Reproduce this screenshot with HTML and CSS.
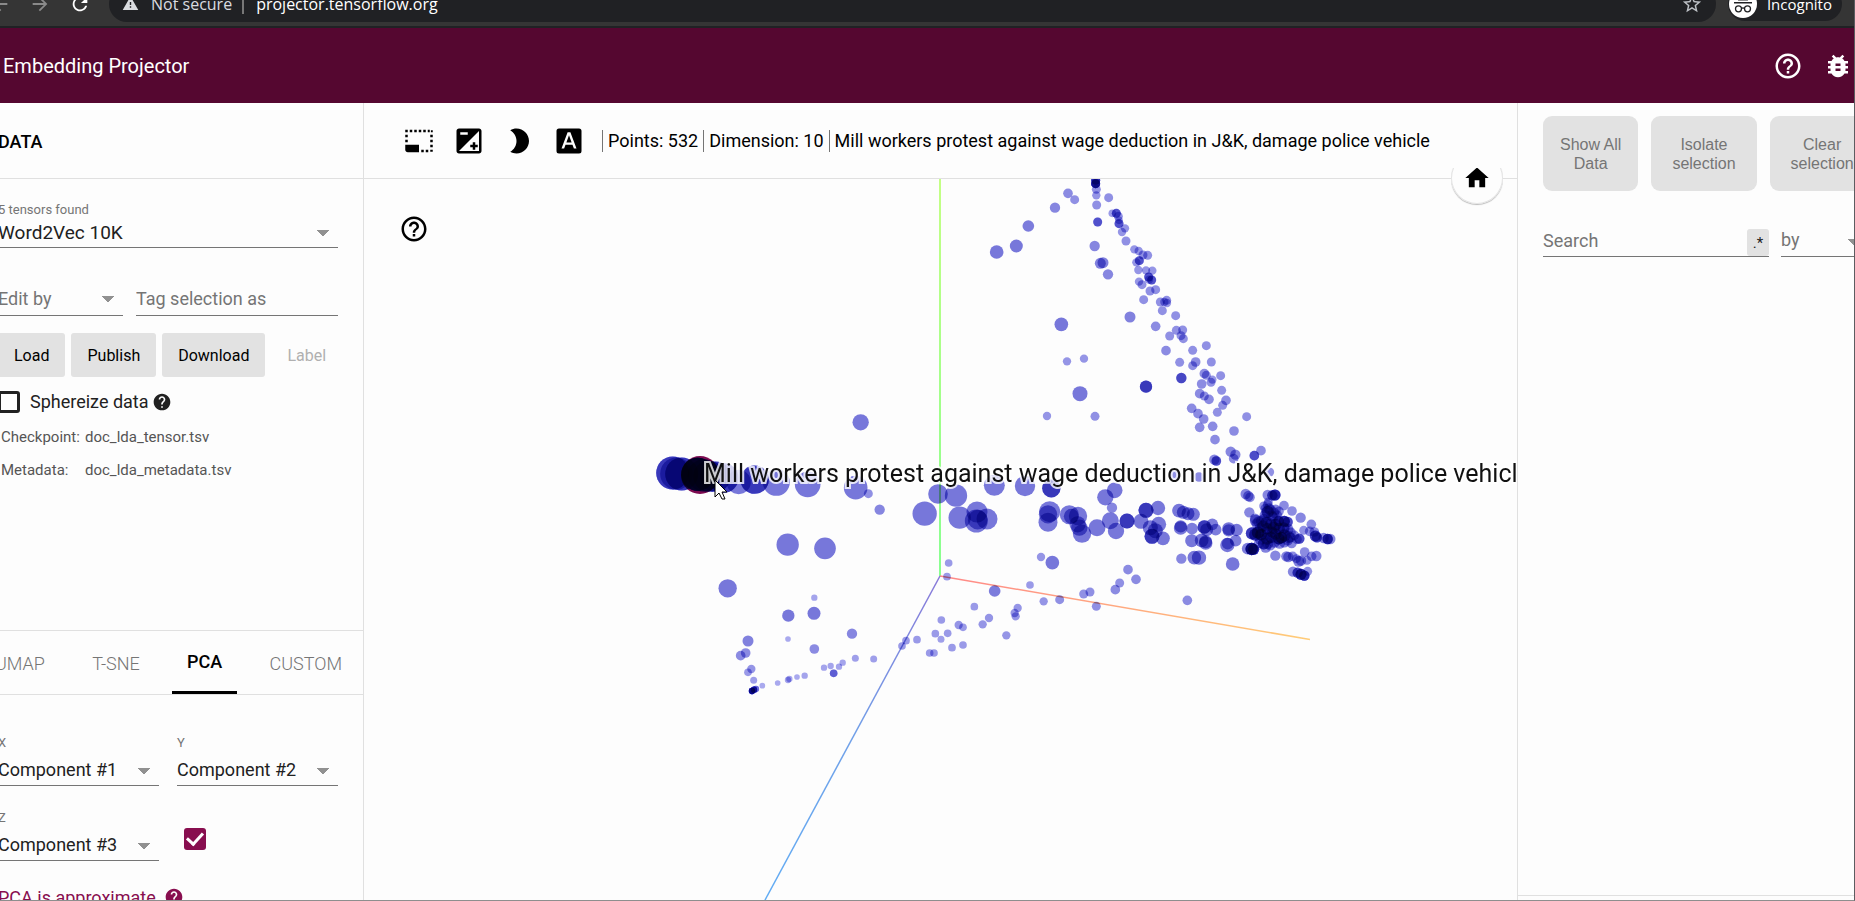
FILE: index.html
```html
<!DOCTYPE html>
<html lang="en">
<head>
<meta charset="utf-8">
<title>Embedding Projector</title>
<link rel="stylesheet" href="styles.css">
</head>
<body>
<svg class="sprite" aria-hidden="true">
  <symbol id="i-help-outline" viewBox="0 0 24 24"><path d="M11 18h2v-2h-2v2zm1-16C6.480 2 2 6.480 2 12s4.480 10 10 10 10-4.480 10-10S17.520 2 12 2zm0 18c-4.410 0-8-3.590-8-8s3.590-8 8-8 8 3.590 8 8-3.590 8-8 8zm0-14c-2.210 0-4 1.790-4 4h2c0-1.100.9-2 2-2s2 .9 2 2c0 2-3 1.750-3 5h2c0-2.250 3-2.500 3-5 0-2.210-1.790-4-4-4z"/></symbol>
  <symbol id="i-help" viewBox="0 0 24 24"><path d="M12 2C6.480 2 2 6.480 2 12s4.480 10 10 10 10-4.480 10-10S17.520 2 12 2zm1 17h-2v-2h2v2zm2.070-7.750l-.9.920C13.450 12.900 13 13.500 13 15h-2v-.5c0-1.100.45-2.100 1.170-2.830l1.240-1.260c.37-.36.590-.86.590-1.410 0-1.100-.9-2-2-2s-2 .9-2 2H8c0-2.210 1.790-4 4-4s4 1.790 4 4c0 .88-.36 1.680-.93 2.250z"/></symbol>
  <symbol id="i-bug" viewBox="0 0 24 24"><path d="M20 8h-2.810c-.45-.78-1.070-1.450-1.820-1.960L17 4.410 15.590 3l-2.170 2.170C12.960 5.060 12.490 5 12 5c-.49 0-.96.060-1.410.17L8.410 3 7 4.410l1.620 1.630C7.880 6.550 7.260 7.220 6.810 8H4v2h2.090c-.05.33-.09.66-.09 1v1H4v2h2v1c0 .34.04.67.09 1H4v2h2.810c1.040 1.790 2.970 3 5.190 3s4.150-1.210 5.190-3H20v-2h-2.090c.05-.33.09-.66.09-1v-1h2v-2h-2v-1c0-.34-.04-.67-.09-1H20V8zm-6 8h-4v-2h4v2zm0-4h-4v-2h4v2z"/></symbol>
  <symbol id="i-select" viewBox="0 0 24 24"><path d="M1 15h11v6H3c-1.100 0-2-.9-2-2z"/><path d="M1 3h2v2H1zM4.600 3h2v2h-2zM8.200 3h2v2h-2zM11.800 3h2v2h-2zM15.400 3h2v2h-2zM19 3h1.600v2H19zM21.500 3.400h1.500v1.600h-1.500zM1 7h2v2H1zM1 11h2v2H1zM21 7h2v2h-2zM21 11h2v2h-2zM21 15h2v2h-2zM21 19h2v1.500h-2zM13.800 19h2v2h-2zM17.400 19h2v2h-2z"/></symbol>
  <symbol id="i-exposure" viewBox="0 0 24 24"><path d="M15 17v2h2v-2h2v-2h-2v-2h-2v2h-2v2h2zm5-15H4c-1.100 0-2 .9-2 2v16c0 1.100.9 2 2 2h16c1.100 0 2-.9 2-2V4c0-1.100-.9-2-2-2zM5 5h6v2H5V5zm15 15H4L20 4v16z"/></symbol>
  <symbol id="i-moon" viewBox="0 0 24 24"><path d="M10 2c-1.820 0-3.530.5-5 1.350C7.990 5.080 10 8.300 10 12s-2.010 6.920-5 8.650C6.470 21.500 8.180 22 10 22c5.520 0 10-4.480 10-10S15.520 2 10 2z"/></symbol>
  <symbol id="i-labels" viewBox="0 0 24 24"><path fill-rule="evenodd" d="M4 2h16a2 2 0 0 1 2 2v16a2 2 0 0 1-2 2H4a2 2 0 0 1-2-2V4a2 2 0 0 1 2-2zm6.900 3L6 18h2.100l1.100-3h5.600l1.100 3H18L13.100 5zm1.100 2.400l2.100 5.800H9.900z"/></symbol>
  <symbol id="i-home" viewBox="0 0 24 24"><path d="M10 20v-6h4v6h5v-8h3L12 3 2 12h3v8z"/></symbol>
  <symbol id="i-back" viewBox="0 0 24 24"><path d="M20 11H7.830l5.590-5.590L12 4l-8 8 8 8 1.410-1.410L7.830 13H20v-2z"/></symbol>
  <symbol id="i-forward" viewBox="0 0 24 24"><path d="M12 4l-1.410 1.410L16.170 11H4v2h12.170l-5.580 5.590L12 20l8-8z"/></symbol>
  <symbol id="i-reload" viewBox="0 0 24 24"><path d="M17.650 6.350C16.200 4.900 14.210 4 12 4c-4.420 0-7.990 3.580-7.990 8s3.570 8 7.990 8c3.730 0 6.840-2.550 7.730-6h-2.080c-.82 2.330-3.040 4-5.650 4-3.310 0-6-2.690-6-6s2.690-6 6-6c1.660 0 3.140.69 4.220 1.780L13 11h7V4l-2.350 2.350z"/></symbol>
  <symbol id="i-warning" viewBox="0 0 24 24"><path d="M1 21h22L12 2 1 21zm12-3h-2v-2h2v2zm0-4h-2v-4h2v4z"/></symbol>
  <symbol id="i-star" viewBox="0 0 24 24"><path d="M22 9.240l-7.190-.62L12 2 9.190 8.630 2 9.240l5.460 4.730L5.820 21 12 17.270 18.180 21l-1.630-7.030L22 9.240zM12 15.400l-3.760 2.270 1-4.280-3.320-2.880 4.380-.38L12 6.100l1.710 4.040 4.380.38-3.320 2.880 1 4.280L12 15.400z"/></symbol>
  <symbol id="i-incognito" viewBox="0 0 28 28"><circle cx="14" cy="14" r="14" fill="#fff"/><path d="M5 12h18v1.600H5zM9 10.400l1.500-6h7l1.500 6z" fill="#202124"/><g fill="none" stroke="#202124" stroke-width="1.300"><circle cx="9.500" cy="18.800" r="3"/><circle cx="18.500" cy="18.800" r="3"/><path d="M12.500 18.500q1.500-1.200 3 0"/></g></symbol>
</svg>
<div class="window">
  <div class="browser">
    <svg class="nav dim"><use href="#i-back"/></svg>
    <svg class="nav dim"><use href="#i-forward"/></svg>
    <svg class="nav"><use href="#i-reload"/></svg>
    <div class="address">
      <svg class="warn"><use href="#i-warning"/></svg>
      <span class="insecure">Not secure</span>
      <span class="url">projector.tensorflow.org</span>
      <svg class="star"><use href="#i-star"/></svg>
    </div>
    <div class="incognito"><svg><use href="#i-incognito"/></svg><span>Incognito</span></div>
  </div>
  <div class="shell">
    <header class="appbar">
      <h1>Embedding Projector</h1>
      <a href="#help" aria-label="Help"><svg class="icon"><use href="#i-help-outline"/></svg></a>
      <a href="#bug" aria-label="Report a bug"><svg class="icon"><use href="#i-bug"/></svg></a>
    </header>
    <main class="columns">
      <aside class="side">
        <h2>DATA</h2>
        <div class="data">
          <label class="small" for="tensor">5 tensors found</label>
          <select id="tensor" class="field"><option>Word2Vec 10K</option></select>
          <div class="edit">
            <select class="field muted" aria-label="Edit by"><option>Edit by</option></select>
            <input class="field" type="text" placeholder="Tag selection as" aria-label="Tag selection as">
          </div>
          <div class="actions">
            <button>Load</button><button>Publish</button><button>Download</button><button class="flat" disabled>Label</button>
          </div>
          <div class="sphere">
            <input type="checkbox" id="sphere" class="box"><label for="sphere">Sphereize data</label><svg class="hint"><use href="#i-help"/></svg>
          </div>
          <dl class="files">
            <dt>Checkpoint:</dt><dd>doc_lda_tensor.tsv</dd>
            <dt>Metadata:</dt><dd>doc_lda_metadata.tsv</dd>
          </dl>
        </div>
        <nav class="tabs">
          <button>UMAP</button><button>T-SNE</button><button class="active">PCA</button><button>CUSTOM</button>
        </nav>
        <div class="pca">
          <div class="axis"><label class="small" for="cx">X</label><select id="cx" class="field"><option>Component #1</option></select></div>
          <div class="axis"><label class="small" for="cy">Y</label><select id="cy" class="field"><option>Component #2</option></select></div>
          <div class="axis"><label class="small" for="cz">Z</label><select id="cz" class="field"><option>Component #3</option></select></div>
          <div class="toggle"><input type="checkbox" class="box" checked aria-label="Use component Z"></div>
          <p class="approx">PCA is approximate. <svg class="hint"><use href="#i-help"/></svg></p>
        </div>
      </aside>
      <section class="center">
        <div class="toolbar">
          <button aria-label="Bounding box selection"><svg class="icon"><use href="#i-select"/></svg></button>
          <button aria-label="Toggle selection edit mode"><svg class="icon"><use href="#i-exposure"/></svg></button>
          <button aria-label="Night mode"><svg class="icon"><use href="#i-moon"/></svg></button>
          <button aria-label="3D labels"><svg class="icon"><use href="#i-labels"/></svg></button>
          <div class="stats"><span>Points: 532</span><span>Dimension: 10</span><span>Mill workers protest against wage deduction in J&amp;K, damage police vehicle</span></div>
        </div>
        <div class="stage">
          <svg id="scene" viewBox="364 179 1153 721" preserveAspectRatio="xMinYMin slice">
            <defs>
              <linearGradient id="gx" gradientUnits="userSpaceOnUse" x1="940" y1="576" x2="1310" y2="639"><stop offset="0" stop-color="#f88"/><stop offset="1" stop-color="#fc7"/></linearGradient>
              <linearGradient id="gz" gradientUnits="userSpaceOnUse" x1="940" y1="576" x2="765" y2="900"><stop offset="0" stop-color="#8878d8"/><stop offset=".5" stop-color="#70a0e8"/><stop offset="1" stop-color="#60acf4"/></linearGradient>
              <linearGradient id="gy" gradientUnits="userSpaceOnUse" x1="940" y1="179" x2="940" y2="576"><stop offset="0" stop-color="#c4ff84"/><stop offset="1" stop-color="#88ff90"/></linearGradient>
            </defs>
            <rect x="939" y="179" width="2" height="397" fill="url(#gy)"/>
            <path d="M940 576L1310 639.500" stroke="url(#gx)" stroke-width="1.500"/>
            <path d="M940 576L765 900" stroke="url(#gz)" stroke-width="1.500"/>
            <g id="points"></g>
            <text class="hover-label" x="704" y="482">Mill workers protest against wage deduction in J&amp;K, damage police vehicle</text>
            <path d="M715 480v17l4-4 3 6h3l-3-7h5z" fill="#fff" stroke="#000"/>
          </svg>
          <button class="scene-help" aria-label="Scene help"><svg class="icon"><use href="#i-help-outline"/></svg></button>
          <div class="home-wrap"><button class="home" aria-label="Reset view"><svg><use href="#i-home"/></svg></button></div>
        </div>
      </section>
      <aside class="inspector">
        <div class="bulk"><button>Show All<br>Data</button><button>Isolate<br>selection</button><button>Clear<br>selection</button></div>
        <div class="search">
          <div class="query"><input type="text" placeholder="Search" aria-label="Search"><button aria-label="Regex">.*</button></div>
          <select class="field muted" aria-label="Search by"><option>by</option></select>
        </div>
        <div class="bookmarks"></div>
      </aside>
    </main>
  </div>
</div>
<script src="points.js"></script>
</body>
</html>
```
FILE: styles.css
```css
* { box-sizing: border-box; }
body { margin: 0; font-family: Roboto, "Liberation Sans", sans-serif; font-size: 18px; color: #212121; background: #fdfdfd; }
button, input, select { font: inherit; color: inherit; }
button { border: 0; background: none; padding: 0; }
h1, h2, p, dl, dd { margin: 0; }
.sprite { position: absolute; width: 0; height: 0; }
.window { display: flex; flex-direction: column; height: 100vh; overflow: hidden; border-right: 1px solid #5c5c60; border-bottom: 1px solid #8e8e8e; }

.browser { display: flex; align-items: center; flex: none; height: 50px; margin-top: -22px; padding: 3px 12px 0 0; background: #353535; border-bottom: 2px solid #202124; color: #e8eaed; font-family: "Open Sans", "Noto Sans", sans-serif; font-size: 16px; }
.nav { width: 22px; height: 22px; flex: none; margin-right: 18px; fill: #fff; }
.nav:first-child { margin-left: -11px; }
.nav.dim { fill: #8a8a8a; }
.address { display: flex; align-items: center; flex: 1; height: 36px; margin-right: 12px; padding: 0 13px; background: #202124; border-radius: 18px; }
.warn { width: 17px; height: 17px; margin-right: 12px; fill: #dadce0; }
.insecure { color: #dadce0; padding-right: 10px; margin-right: 12px; border-right: 2px solid #777; line-height: 20px; }
.url { color: #fff; }
.star { width: 22px; height: 22px; margin-left: auto; fill: #bdc1c6; }
.incognito { display: flex; align-items: center; gap: 10px; height: 34px; padding: 0 10px 0 1px; border-radius: 17px; background: #202124; color: #fff; font-size: 15px; }
.incognito svg { width: 28px; height: 28px; }

.shell { display: flex; flex-direction: column; flex: 1; min-height: 0; margin: 0 -24px; }
.icon { display: block; width: 30px; height: 30px; fill: currentColor; }
.appbar { display: flex; align-items: center; flex: none; height: 75px; padding: 0 25px 0 27px; background: #550730; color: #fff; gap: 20px; }
.appbar h1 { flex: 1; font-size: 20px; font-weight: 400; }
.appbar a { color: #fff; }
.columns { display: grid; grid-template-columns: 388px minmax(0, 1fr) 361px; flex: 1; min-height: 0; }

.side { border-right: 1px solid #e0e0e0; overflow: hidden; }
.side h2 { height: 76px; padding-left: 22px; line-height: 78px; font-size: 18px; font-weight: 500; color: #000; border-bottom: 1px solid #e0e0e0; }
.data { min-height: 451px; padding: 21px 25px 0 22px; }
.small { display: block; font-size: 13px; line-height: 20px; color: #757575; }
.field { display: block; width: 100%; min-width: 0; height: 34px; padding: 0 0 2px; border: 0; border-bottom: 1px solid #757575; border-radius: 0; appearance: none; background: transparent; outline: 0; }
select.field {
  background-image: linear-gradient(to top right, transparent 50%, #919191 51%), linear-gradient(to top left, transparent 50%, #919191 51%);
  background-size: 7px 7px;
  background-position: right 15px top 14px, right 8px top 14px;
  background-repeat: no-repeat;
}
#tensor { height: 28px; padding-bottom: 3px; font-size: 19px; background-position: right 15px top 10px, right 8px top 10px; }
.muted, .field::placeholder { color: #757575; opacity: 1; }
.edit { display: grid; grid-template-columns: 125px minmax(0, 1fr); gap: 13px; margin-top: 34px; }
.edit .field { padding-bottom: 0; }
.actions { display: flex; gap: 6px; margin-top: 17px; }
.actions button { height: 44px; padding: 0 16px; border-radius: 3px; background: #e2e2e2; color: #000; font-size: 16px; }
.actions .flat { background: none; color: #b0b0b0; }
.sphere { display: flex; align-items: center; margin-top: 12px; height: 25px; }
.box { appearance: none; display: block; flex: none; width: 22px; height: 22px; margin: 0; border: 3px solid #212121; border-radius: 3px; }
.box:checked { border: 0; background: #880e4f; display: grid; place-items: center; }
.box:checked::after { content: ""; width: 7px; height: 13px; margin-top: -4px; border: solid #fff; border-width: 0 3px 3px 0; transform: rotate(42deg); }
.sphere label { margin: 0 3px 0 10px; }
.hint { flex: none; width: 20px; height: 20px; fill: currentColor; }
.files { display: grid; grid-template-columns: 84px 1fr; row-gap: 13px; margin: 13px 0 0 3px; font-size: 15px; line-height: 20px; color: #555; }
.tabs { display: flex; justify-content: space-between; height: 65px; padding: 0 6px 0 4px; border-top: 1px solid #e0e0e0; border-bottom: 1px solid #e0e0e0; }
.tabs button { padding: 4px 15px 0; font-weight: 300; color: #757575; border-bottom: 3px solid transparent; }
.tabs .active { font-weight: 500; color: #000; border-color: #000; padding-top: 0; }
.pca { display: grid; grid-template-columns: repeat(2, minmax(0, 1fr)); column-gap: 18px; row-gap: 21px; padding: 37px 25px 0 22px; white-space: nowrap; }
.axis .small { line-height: 22px; }
.axis .field { height: 32px; padding-bottom: 0; }
.toggle { padding: 21px 7px 0; }
.approx { display: flex; grid-column: 1 / -1; gap: 4px; align-items: center; height: 30px; color: #880e4f; }

.center { display: flex; flex-direction: column; min-width: 0; }
.toolbar { display: flex; align-items: center; flex: none; height: 76px; gap: 20px; padding-left: 40px; border-bottom: 1px solid #e0e0e0; color: #000; }
.stats { display: flex; white-space: nowrap; gap: 5px; margin-left: -2px; }
.stats span { border-left: 1px solid #757575; padding-left: 5px; line-height: 22px; }
.stage { position: relative; flex: 1; min-height: 0; }
#scene { display: block; width: 100%; height: 100%; isolation: isolate; }
#points circle { mix-blend-mode: multiply; }
.hover-label { font-size: 25px; fill: #111; stroke: #fff; stroke-width: 4px; stroke-opacity: .8; paint-order: stroke; }
.scene-help { position: absolute; left: 35px; top: 35px; color: #000; }
.home-wrap { position: absolute; top: -11px; right: 14px; height: 42px; padding: 0 0 4px; overflow: hidden; }
.home { display: grid; place-items: center; width: 52px; height: 52px; margin-top: -16px; border-radius: 50%; background: #fdfdfd; box-shadow: inset 0 0 0 1px #e4e4e4, 0 1px 1px #bbb; }
.home svg { width: 28px; height: 28px; }

.inspector { display: flex; flex-direction: column; border-left: 1px solid #e0e0e0; padding: 13px 0 0 25px; overflow: hidden; }
.bulk { display: flex; gap: 13px; }
.bulk button { flex: none; height: 75px; padding: 0 21px; border-radius: 9px; background: #e2e2e2; color: #757575; font-family: "Liberation Sans", sans-serif; font-size: 16px; line-height: 19px; }
.bulk button:first-child { padding: 0 17px; }
.search { display: flex; gap: 12px; margin-top: 34px; }
.query { display: flex; flex: none; width: 226px; height: 32px; align-items: flex-end; border-bottom: 1px solid #757575; }
.query input { flex: 1; min-width: 0; height: 32px; border: 0; padding: 0; background: none; outline: 0; }
.query input::placeholder { color: #757575; opacity: 1; }
.query button { width: 22px; height: 27px; border-radius: 3px; background: #e2e2e2; color: #212121; font-size: 15px; }
.search .field { height: 32px; background-position: right 24px top 14px, right 17px top 14px; }
.bookmarks { height: 5px; margin: auto 0 0 -25px; border-top: 1px solid #e0e0e0; }
```
FILE: points.js
```js
// Each group holds an origin and points as [x, y, radius, copies] in thirds of a unit.
const groups = [
  { at: [640, 400], pts: [
    [97,218,49,2],[108,220,48],[124,221,49,2],[172,222,49,5],[190,225,48,2],[205,228,46,2],[225,229,45,2],[250,233,44,2],
    [295,245,36],[343,238,42,2],[408,246,40],[502,252,38],[646,262,35],[661,66,24],[684,280,13],[718,328,15],
    [853,340,36],[893,281,29],[947,286,33],[958,352,33],[1010,335,31],[1008,362,34],[1040,356,31],[1012,358,29],
    [1062,255,31],[1154,257,30],[1233,264,27,2],[442,433,33],[554,444,32],[262,564,27],[522,592,9],[444,646,18],[521,639,19],
    [635,700,15],[443,716,8],[522,746,14],[323,722,16],[316,758,14],[301,766,14],[333,806,12],[323,816,11],[340,840,10],
    [366,856,8],[412,848,8],[443,839,9],[447,836,9],[470,830,8],[493,826,9],[551,802,9],[571,797,9],[580,819,11,2],[596,799,9],
    [607,787,9],[645,774,10],[700,776,10],[785,737,11],[797,721,11],[830,718,11],[868,758,11],[881,758,11],[935,742,11],
    [968,734,11],[902,717,10],[885,700,11],[922,699,11],[903,659,11],[955,674,12],[968,681,11],[1027,672,12],[1046,653,12],
    [1002,619,11],[925,488,11],[920,529,11],[1063,572,17],[1169,554,11],[1210,603,12],[1258,598,13],[1202,470,12],[1236,487,20],
    [1132,623,12],[1123,638,12],[1126,648,12],[1098,705,12],[1330,581,13],[1349,575,13],[335,872,9,8],[341,868,9,5],[347,866,9,2]] },
  { at: [960, 170], pts: [
    [109,245,20],[168,227,19],[204,167,17],[284,112,15],[323,69,14],[343,88,13],[406,40,13,5],[406,30,13,3],[408,57,13],[408,75,12],
    [409,104,13],[445,82,13],[412,155,13,2],[403,227,15],[420,279,16],[428,277,16],[443,312,15],[456,129,11],[468,129,13,2],
    [474,138,13],[476,150,11],[476,160,13,2],[494,174,12],[485,185,12],[497,212,13],[522,237,12],[535,242,12],[548,254,13],
    [562,255,13],[528,276,12],[537,271,13,2],[534,299,12],[557,300,12],[576,301,12],[565,320,13,2],[574,329,13,2],[566,328,12],
    [536,334,12],[545,343,13],[569,362,13],[586,358,13],[550,388,13],[600,395,13],[612,395,12],[619,390,13],[620,398,12],
    [606,421,13],[646,436,13],[509,440,16],[586,468,14],[303,462,20],[320,573,12],[371,565,12],[359,670,22],[260,737,12],
    [404,738,13],[557,649,18,2],[617,541,14],[628,497,13],[648,480,13],[667,479,13],[662,496,13],[669,505,13],[697,540,13],
    [738,526,13],[658,576,13],[706,575,14],[697,586,13],[753,575,13],[663,623,15,2],[732,610,14],[738,615,13],[756,628,12],
    [752,636,13],[724,641,14],[781,616,13],[784,660,13],[718,670,14],[732,677,13],[746,687,14],[797,690,14],[787,705,13],
    [771,726,13],[694,714,14],[713,730,14],[730,746,14],[718,771,14],[757,768,14],[764,808,14],[821,782,14],[859,739,13],
    [811,844,15],[825,853,15],[820,865,14],[762,868,15],[768,872,14,2],[882,856,14,2],[902,841,14],[716,920,14],[643,914,13],[928,905,13]] },
  { at: [1000, 440], pts: [
    [343,150,23],[315,171,24],[335,202,15],[148,214,31],[143,222,27],[143,246,28],[207,223,28],[233,227,27],[213,228,22],
    [232,252,24],[237,262,24],[245,280,27],[290,262,25],[330,241,25],[347,272,24],[380,242,22,2],[422,243,22],[437,210,22,2],
    [473,203,21],[475,252,22],[450,262,22],[465,271,22],[455,288,22,2],[488,294,20],[536,211,20],[549,216,19],[563,220,19],
    [579,222,19],[541,263,20],[541,258,18],[575,265,17],[574,301,19],[612,260,20,2],[619,268,19],[636,252,17],[646,268,17],
    [604,300,20],[616,308,20],[616,304,19],[685,265,19],[685,270,18],[709,269,18],[681,314,21],[682,310,17],[706,301,17],
    [543,355,15],[582,352,20],[596,352,21],[697,371,20],[383,388,14],[407,417,14],[358,428,13],[345,448,14],[288,498,13],[561,480,14]] },
  { at: [1210, 475], pts: [
    [106,56,15],[114,62,15],[119,66,14],[117,111,15],[172,59,15],[186,60,15,2],[194,59,16,3],[172,88,14],[176,100,16],
    [172,110,18,2],[180,104,16],[165,100,14],[196,103,15],[221,91,14],[245,107,14],[271,127,15],[303,147,14],[134,130,15],
    [145,139,16],[140,145,16],[160,130,14],[205,137,15,3],[222,138,16,3],[232,140,15,2],[188,125,15],[200,120,15],[125,174,18,2],
    [143,172,18,3],[152,178,17,3],[135,178,18,2],[170,160,17,2],[185,170,16,2],[205,190,17,3],[213,187,17,3],[222,180,18,2],
    [235,185,18],[240,172,16],[170,190,18,2],[160,205,17,2],[180,210,15],[112,220,17],[124,221,18,4],[130,222,16,3],[244,203,15],
    [267,190,15,2],[260,192,14],[280,165,13],[298,168,14],[312,170,14],[315,182,16,2],[320,186,15,2],[340,188,15],[352,191,15,3],
    [360,191,15],[195,241,15],[228,243,15],[234,245,15],[247,243,14],[283,230,14],[265,258,16],[272,256,15],[258,250,13],
    [290,255,13],[304,243,14],[318,242,15],[248,289,15],[262,292,15,2],[272,297,16,3],[282,301,15,3],[292,288,13],
    [136,136,17],[154,138,17],[168,142,17,2],[182,146,17,2],[196,148,17,2],[158,152,17,2],[150,158,16],[172,172,18],[190,158,18,2],
    [206,160,17,2],[220,158,17,2],[232,162,17],[196,176,17,2],[182,186,17,2],[192,200,17],[208,204,16],[222,200,16],[232,194,16],
    [172,204,17],[166,216,16],[150,192,16],[146,204,15],[190,112,16],[184,122,16],[164,120,16],[206,108,14],[160,92,13],[174,80,13],[240,186,15],[252,180,14]] }
];

const layer = document.getElementById('points');

function dot(x, y, r, fill) {
  const c = document.createElementNS('http://www.w3.org/2000/svg', 'circle');
  c.setAttribute('cx', x);
  c.setAttribute('cy', y);
  c.setAttribute('r', r);
  c.setAttribute('fill', fill);
  layer.appendChild(c);
}

dot(700, 475, 19, '#7d0a50');
for (const g of groups) {
  for (const [x, y, r, copies = 1] of g.pts) {
    // Distant points are smaller and fade toward the background.
    const fade = Math.max(0, 18 - r);
    const v = 119 + fade * 5;
    for (let i = 0; i < copies; i++) {
      dot(g.at[0] + (x + 1) / 3, g.at[1] + (y + 1) / 3, (r + 0.5) / 3, `rgb(${v},${v},${218 + fade * 2})`);
    }
  }
}
```
